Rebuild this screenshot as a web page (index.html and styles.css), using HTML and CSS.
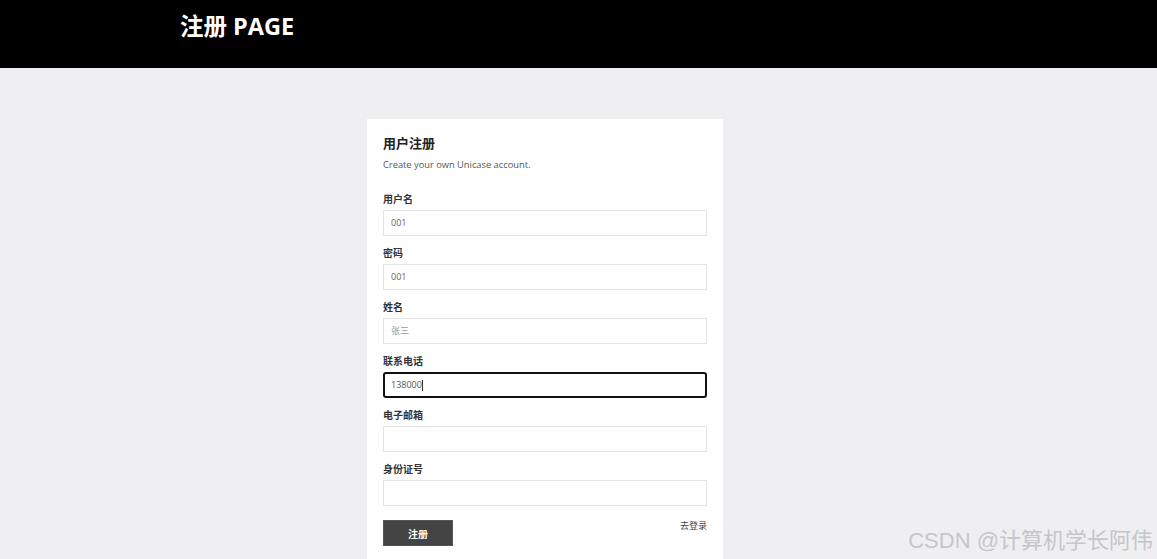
FILE: index.html
```html
<!DOCTYPE html>
<html lang="zh">
<head>
    <meta charset="UTF-8">
    <title>注册 PAGE</title>
    <link rel="stylesheet" href="styles.css">
</head>
<body>
<div class="header">
    <h1 class="pageTitle">注册 PAGE</h1>
</div>

<div class="main">
    <div class="card">
        <h2 class="cardTitle">用户注册</h2>
        <p class="cardSub">Create your own Unicase account.</p>

        <div class="group">
            <label>用户名</label>
            <div class="field">001</div>
        </div>
        <div class="group">
            <label>密码</label>
            <div class="field">001</div>
        </div>
        <div class="group">
            <label>姓名</label>
            <div class="field hint">张三</div>
        </div>
        <div class="group">
            <label>联系电话</label>
            <div class="field focus">138000<span class="caret"></span></div>
        </div>
        <div class="group">
            <label>电子邮箱</label>
            <div class="field"></div>
        </div>
        <div class="group">
            <label>身份证号</label>
            <div class="field"></div>
        </div>

        <div class="actions">
            <button class="btn">注册</button>
            <a class="toLogin" href="#">去登录</a>
        </div>
    </div>
</div>

<div class="mark">CSDN @计算机学长阿伟</div>
</body>
</html>
```

FILE: styles.css
```css
*{
    margin:0;
    padding:0;
    box-sizing:border-box;
}

body{
    background:#efeff1;
    font-family:"Open Sans","Noto Sans CJK SC",sans-serif;
    color:#333;
    height:559px;
    overflow:hidden;
}

.header{
    background:#000;
    height:68px;
    padding-left:180px;
    padding-top:10px;
}
.pageTitle{
    color:#fff;
    font-size:23.5px;
    line-height:32px;
    font-weight:700;
    font-family:"Open Sans","Noto Sans CJK SC",sans-serif;
}

.main{
    display:flex;
    justify-content:center;
    padding-top:51px;
    padding-right:67px;
}
.card{
    background:#fff;
    width:356px;
    height:440px;
    padding:14px 16px;
}
.cardTitle{
    font-size:13px;
    line-height:20px;
    font-weight:700;
    color:#222;
}
.cardSub{
    font-size:9.3px;
    line-height:14px;
    color:#555;
    margin-top:5px;
    margin-bottom:20px;
}

.group{
    margin-bottom:10px;
}
.group label{
    display:block;
    font-size:10px;
    line-height:14px;
    font-weight:700;
    color:#333;
    margin-bottom:4px;
}
.field{
    height:26px;
    border:1px solid #e4e4e4;
    font-size:9px;
    line-height:24px;
    padding-left:7px;
    color:#666;
}
.hint{
    color:#999;
}
.focus{
    border:2px solid #111;
    border-radius:3px;
    padding-left:6px;
    line-height:22px;
    color:#555;
}
.caret{
    display:inline-block;
    width:1px;
    height:11px;
    background:#333;
    vertical-align:middle;
}

.actions{
    display:flex;
    justify-content:space-between;
    align-items:flex-start;
    margin-top:14px;
}
.btn{
    width:70px;
    height:26px;
    background:#444;
    color:#fff;
    border:1px solid #555;
    font-size:10px;
    font-weight:700;
    font-family:"Noto Sans CJK SC",sans-serif;
}
.toLogin{
    font-size:9px;
    line-height:12px;
    color:#444;
    text-decoration:none;
}

.mark{
    position:absolute;
    right:4px;
    bottom:5px;
    font-size:22px;
    color:#c6c6c8;
    font-family:"Liberation Sans","Noto Sans CJK SC",sans-serif;
}
```
